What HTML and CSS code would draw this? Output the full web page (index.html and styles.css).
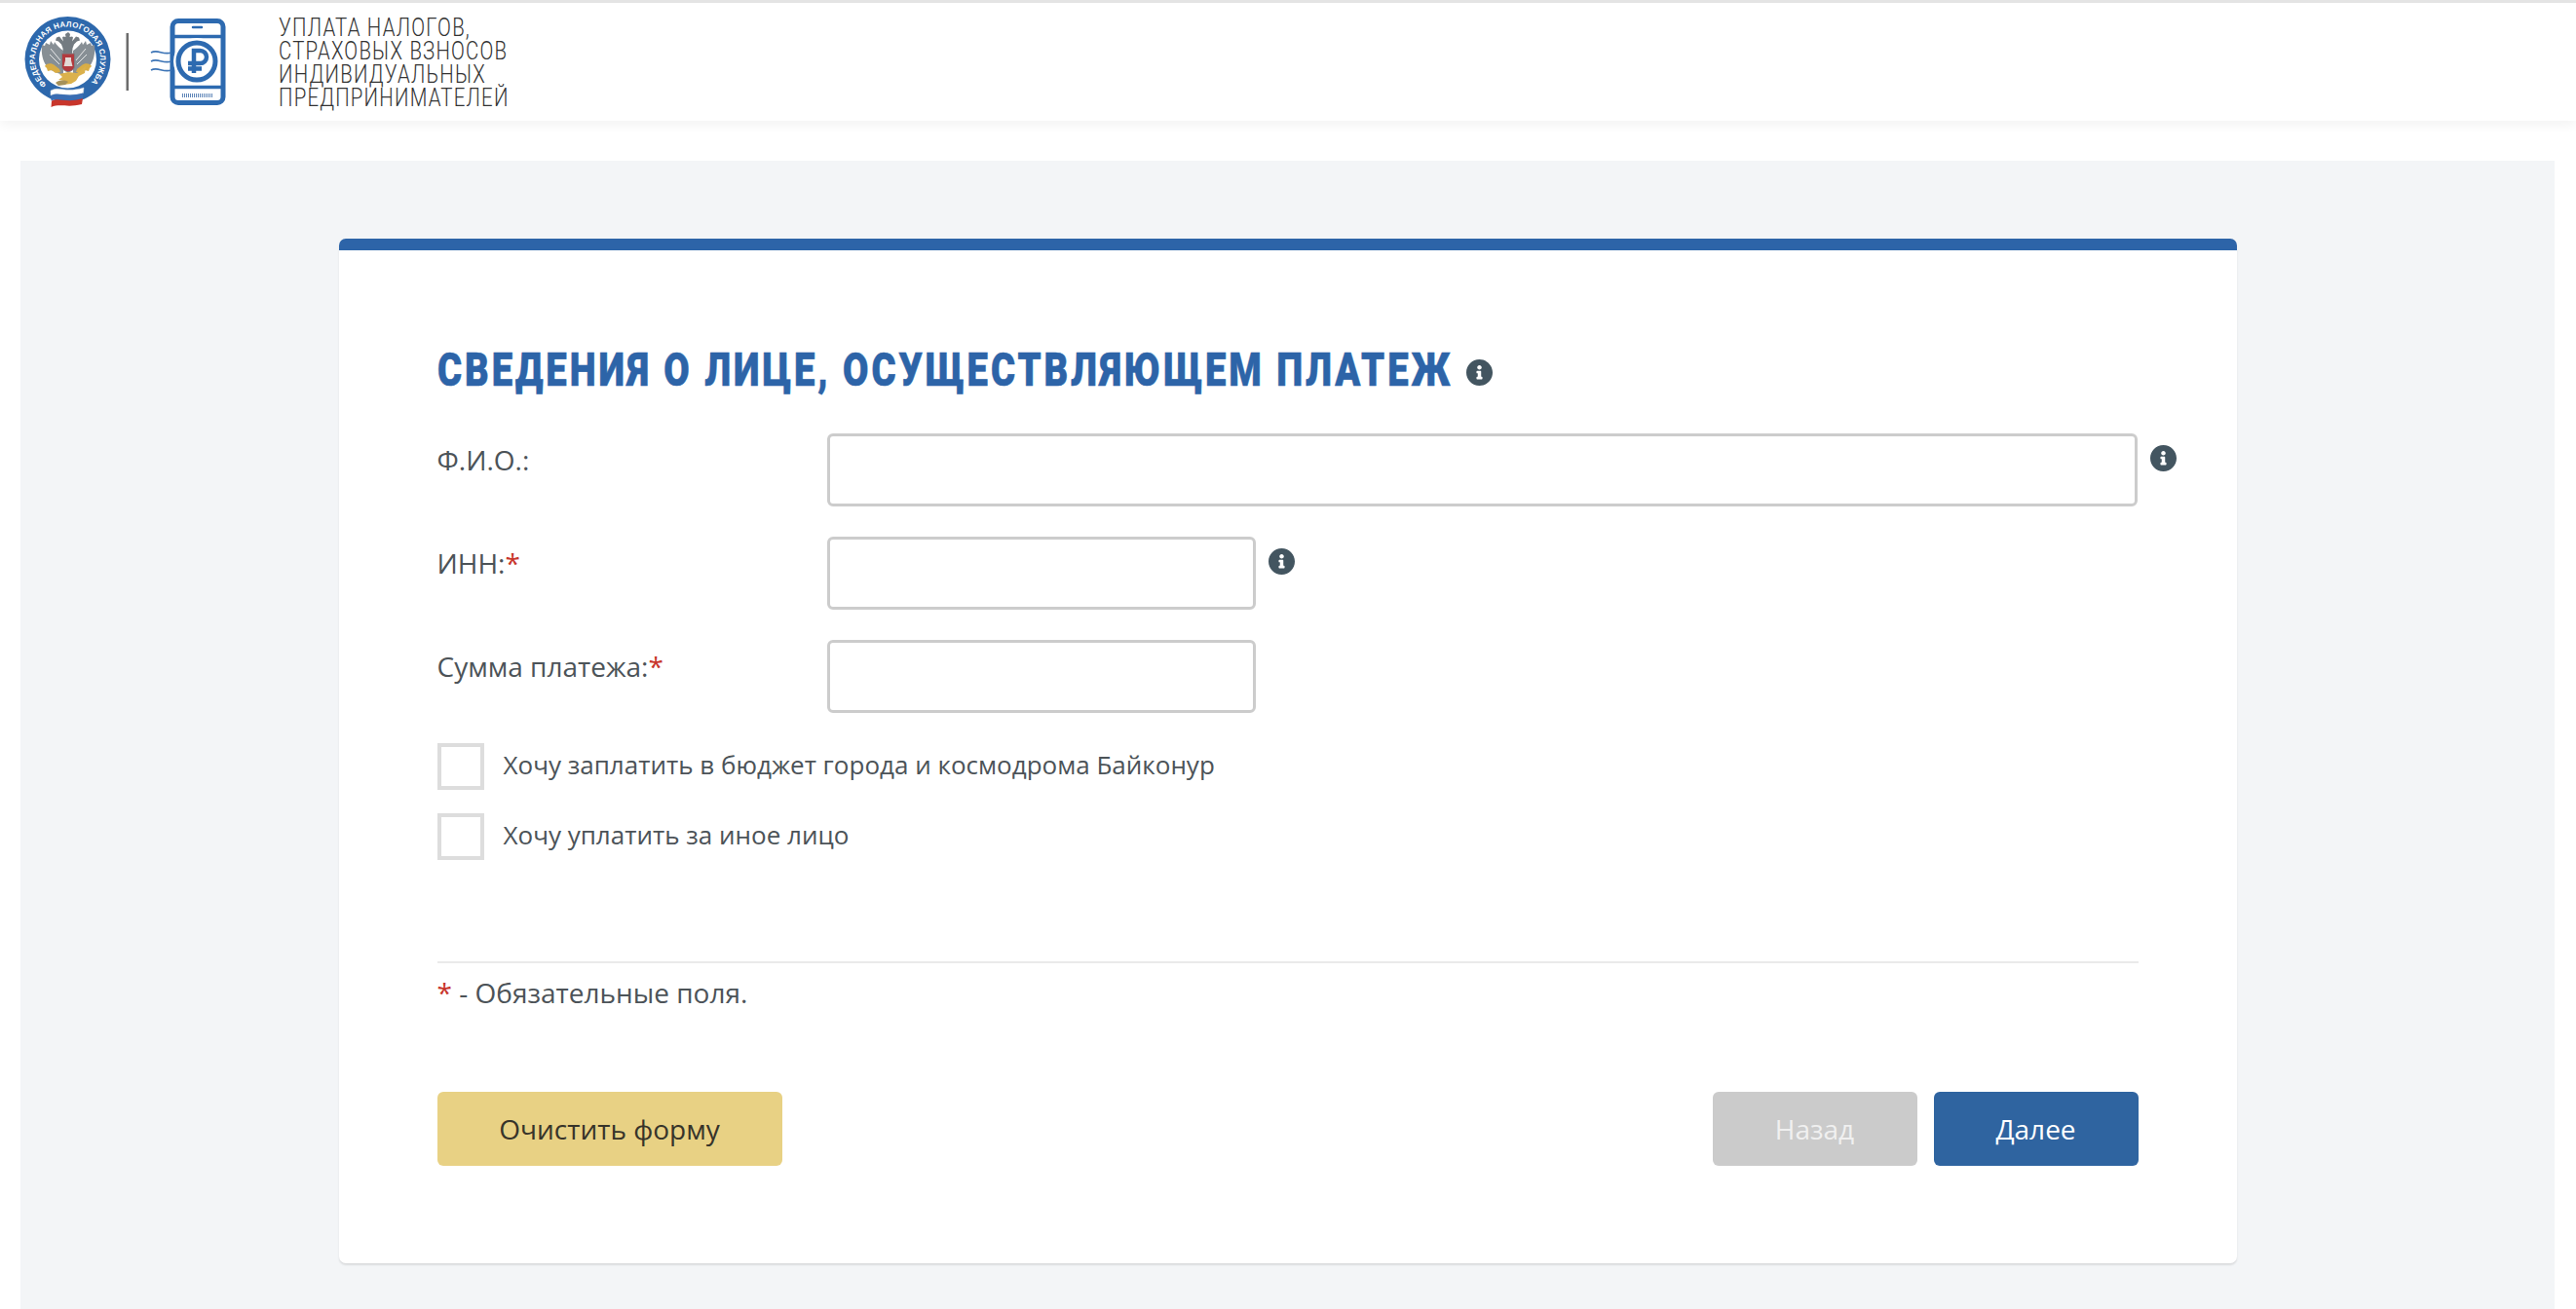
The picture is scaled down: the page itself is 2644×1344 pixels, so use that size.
FILE: index.html
```html
<!DOCTYPE html>
<html lang="ru">
<head>
<meta charset="utf-8">
<title>Уплата налогов</title>
<link rel="stylesheet" href="styles.css">
</head>
<body>
<svg class="defs" width="0" height="0" aria-hidden="true">
  <symbol id="info" viewBox="8 8 496 496"><path d="M256 8C119.043 8 8 119.083 8 256c0 136.997 111.043 248 248 248s248-111.003 248-248C504 119.083 392.957 8 256 8zm0 110c23.196 0 42 18.804 42 42s-18.804 42-42 42-42-18.804-42-42 18.804-42 42-42zm56 254c0 6.627-5.373 12-12 12h-88c-6.627 0-12-5.373-12-12v-24c0-6.627 5.373-12 12-12h12v-64h-12c-6.627 0-12-5.373-12-12v-24c0-6.627 5.373-12 12-12h64c6.627 0 12 5.373 12 12v100h12c6.627 0 12 5.373 12 12v24z"/></symbol>
</svg>
<header class="site-header">
  <svg class="logo" viewBox="0 3 240 121" width="240" height="121" aria-hidden="true">
    <circle cx="69.500" cy="61" r="44" fill="#2d68ac"/>
    <circle cx="69.500" cy="61" r="29.500" fill="#fff"/>
    <path id="ring" d="M48 86.700A33.500 33.500 0 1 1 91 86.700" fill="none"/>
    <text class="ring-text"><textPath href="#ring" textLength="160">ФЕДЕРАЛЬНАЯ НАЛОГОВАЯ СЛУЖБА</textPath></text>
    <path d="M65 52c-3-2-7-6-9-9l-1 3-3-4-1 4-4-2-1 3-3-1c-1 9 1 17 5 22l4 4 3 1 4 2 6 2z" fill="#878f95"/>
    <path d="M75 52c3-2 7-6 9-9l1 3 3-4 1 4 4-2 1 3 3-1c1 9-1 17-5 22l-4 4-3 1-4 2-6 2z" fill="#878f95"/>
    <path d="M52 50l10 12M51 56l10 10M88 50l-10 12M89 56l-10 10" stroke="#fff" stroke-width=".8" fill="none"/>
    <path d="M70 33l2 2-.5 3 2.500-.5 1 1-1 4 4-5 3 1 1 3-3 1-3 3-1.500 4-1.500 20-3.500 5-3.500-5-1.500-20-1.500-4-3-3-3-1 1-3 3-1 4 5-1-4 1-1 2.500.5-.5-3z" fill="#737b81"/>
    <path d="M63.500 55h13v13c0 3-3 5-6.500 6-3.500-1-6.500-3-6.500-6z" fill="#b23a3e" stroke="#7d7f83" stroke-width="1"/>
    <path d="M67 59h6v3l1.500 6h-9l1.500-6z" fill="#e3d8d4"/>
    <path d="M46 68c1-3 7-4 10-1l5 4 1 3-5 1-4-3-4 1-1-3zM94 68c-1-3-7-4-10-1l-5 4-1 3 5 1 4-3 4 1 1-3z" fill="#d9ad45"/>
    <path d="M61 76l9-2 9 1 9-7-1 7-6 3-3 5-5 3-8 1 1-4-6-1 4-3z" fill="#dbb14c"/>
    <path d="M57 85c4-3 9-3 13-1l-3 3-7 1z" fill="#a6915a"/>
    <path d="M52 93c10-5 14 3 34-3l-.5 5.500c-19 5-24-2-33.500 2.500z" fill="#fff" stroke="#d0d5dc" stroke-width=".5"/>
    <path d="M52.500 98c9-4 15 3 33-2.500l-.5 5.500c-18 5-23-2-32.500 2.500z" fill="#3a6db3"/>
    <path d="M53 103.500c9-4 14 3 32-2.500l-1 6c-15 4-22-1-31.500 3z" fill="#c8352b"/>
    <rect x="129.500" y="34" width="2.500" height="59" fill="#6c6c6c"/>
    <rect x="177" y="21.500" width="52" height="84" rx="6" fill="#fff" stroke="#2d6ab0" stroke-width="5"/>
    <path d="M176 37.500h54M176 89.500h54" stroke="#2d6ab0" stroke-width="3.500" fill="none"/>
    <path d="M198 28h9" stroke="#2d6ab0" stroke-width="2.500" stroke-linecap="round"/>
    <path d="M187 98h31" stroke="#5f86b8" stroke-width="4" stroke-dasharray="1 1"/>
    <circle cx="202" cy="63" r="24" fill="#fff"/>
    <circle cx="202" cy="63" r="19" fill="#fff" stroke="#2d6ab0" stroke-width="5"/>
    <path d="M199 75V52h6.500a6.500 6.500 0 0 1 0 13H193M193 70.500h14" fill="none" stroke="#2d6ab0" stroke-width="4.500"/>
    <path d="M155 54c7-4 12 3 21 0M155 63c7-4 12 3 21 0M155 72c7-4 12 3 21 0" fill="none" stroke="#3c74b6" stroke-width="1.600"/>
  </svg>
  <p class="site-title">УПЛАТА НАЛОГОВ,<br>СТРАХОВЫХ ВЗНОСОВ<br>ИНДИВИДУАЛЬНЫХ<br>ПРЕДПРИНИМАТЕЛЕЙ</p>
</header>
<main class="panel">
  <form class="card">
    <h1 class="card-title"><span class="card-title-text">СВЕДЕНИЯ О ЛИЦЕ, ОСУЩЕСТВЛЯЮЩЕМ ПЛАТЕЖ</span><svg class="info"><use href="#info"/></svg></h1>
    <div class="rows">
      <div class="row">
        <label class="row-label">Ф.И.О.:</label>
        <div class="field field-wide"><input class="input input-wide" type="text"><svg class="info"><use href="#info"/></svg></div>
      </div>
      <div class="row">
        <label class="row-label">ИНН:<span class="req">*</span></label>
        <div class="field"><input class="input" type="text"><svg class="info"><use href="#info"/></svg></div>
      </div>
      <div class="row">
        <label class="row-label">Сумма платежа:<span class="req">*</span></label>
        <div class="field"><input class="input" type="text"></div>
      </div>
    </div>
    <div class="checks">
      <label class="check"><span class="box"></span><span class="check-text">Хочу заплатить в бюджет города и космодрома Байконур</span></label>
      <label class="check"><span class="box"></span><span class="check-text">Хочу уплатить за иное лицо</span></label>
    </div>
    <hr class="divider">
    <p class="note"><span class="req">*</span> - Обязательные поля.</p>
    <div class="actions">
      <button class="btn btn-clear" type="button">Очистить форму</button>
      <div class="actions-right">
        <button class="btn btn-back" type="button">Назад</button>
        <button class="btn btn-next" type="button">Далее</button>
      </div>
    </div>
  </form>
</main>
</body>
</html>
```
FILE: styles.css
```css
* { box-sizing: border-box; }
html, body { margin: 0; padding: 0; background: #fff; }
body {
  height: 1344px;
  overflow: hidden;
  font-family: "Open Sans", "Noto Sans", sans-serif;
  font-size: 28px;
  color: #4c5358;
}
.defs { position: absolute; }
.site-header {
  height: 124px;
  border-top: 3px solid #e4e4e4;
  background: #fff;
  display: flex;
  align-items: center;
  box-shadow: 0 3px 12px rgba(0, 0, 0, .06);
}
.logo { flex: none; display: block; }
.ring-text {
  font-family: "Liberation Sans", sans-serif;
  font-weight: 700;
  font-size: 8px;
  fill: #fff;
}
.site-title {
  margin: 3px 0 0 46px;
  font-family: "Roboto", "Liberation Sans", sans-serif;
  font-weight: 300;
  font-size: 25px;
  line-height: 24px;
  letter-spacing: 1.500px;
  color: #333;
  white-space: nowrap;
  transform: scaleX(.815);
  transform-origin: 0 50%;
}
.panel {
  margin: 41px 22px 0 21px;
  height: 1179px;
  padding-top: 80px;
  background: #f3f5f7;
}
.card {
  width: 1948px;
  height: 1052px;
  margin: 0 auto;
  padding: 94px 101px 0;
  background: #fff;
  border-top: 12px solid #2d64a8;
  border-radius: 7px;
  box-shadow: 0 2px 2px rgba(0, 0, 0, .1);
}
.card-title {
  display: flex;
  align-items: center;
  gap: 13px;
  margin: 0 0 38px;
  height: 56px;
  font-family: "Roboto", "Liberation Sans", sans-serif;
  font-weight: 900;
  font-size: 49px;
  line-height: 56px;
  letter-spacing: 3.800px;
  white-space: nowrap;
  color: #2d64a8;
}
.card-title-text {
  display: block;
  width: 1043px;
  flex: none;
  margin-top: 2px;
  -webkit-text-stroke: .6px #2d64a8;
  transform: scaleX(.78);
  transform-origin: 0 50%;
}
.info { width: 27px; height: 27px; flex: none; fill: #435560; }
.card-title .info { margin-top: 6px; }
.rows { display: flex; flex-direction: column; gap: 31px; }
.row { display: flex; height: 75px; }
.row-label { width: 400px; flex: none; line-height: 42px; padding-top: 6px; }
.req { color: #c8352b; }
.field { display: flex; align-items: flex-start; gap: 13px; }
.field-wide { flex: 1; margin-right: -39px; }
.input {
  width: 440px;
  height: 75px;
  background: #fff;
  border: 3px solid #ccc;
  border-radius: 6px;
  outline: none;
}
.input-wide { width: auto; flex: 1; min-width: 0; }
.field .info { margin-top: 12px; }
.checks { margin-top: 31px; display: flex; flex-direction: column; gap: 24px; }
.check { display: flex; align-items: center; gap: 20px; height: 48px; font-size: 26px; }
.check-text { margin-top: -5px; }
.box { width: 48px; height: 48px; flex: none; background: #fff; border: 4px solid #ddd; }
.divider { margin: 104px 0 0; height: 2px; border: 0; background: #eaeaea; }
.note { margin: 9px 0 0; line-height: 42px; }
.actions { margin-top: 81px; display: flex; justify-content: space-between; }
.actions-right { display: flex; gap: 17px; }
.btn {
  width: 210px;
  height: 76px;
  border: 0;
  border-radius: 6px;
  font-family: "Open Sans", sans-serif;
  font-size: 28px;
  color: #fff;
}
.btn-clear { width: 354px; background: #e8d184; color: #37342a; }
.btn-back { background: #cbcbcb; color: #f0f0f0; }
.btn-next { background: #2f64a0; }
```
